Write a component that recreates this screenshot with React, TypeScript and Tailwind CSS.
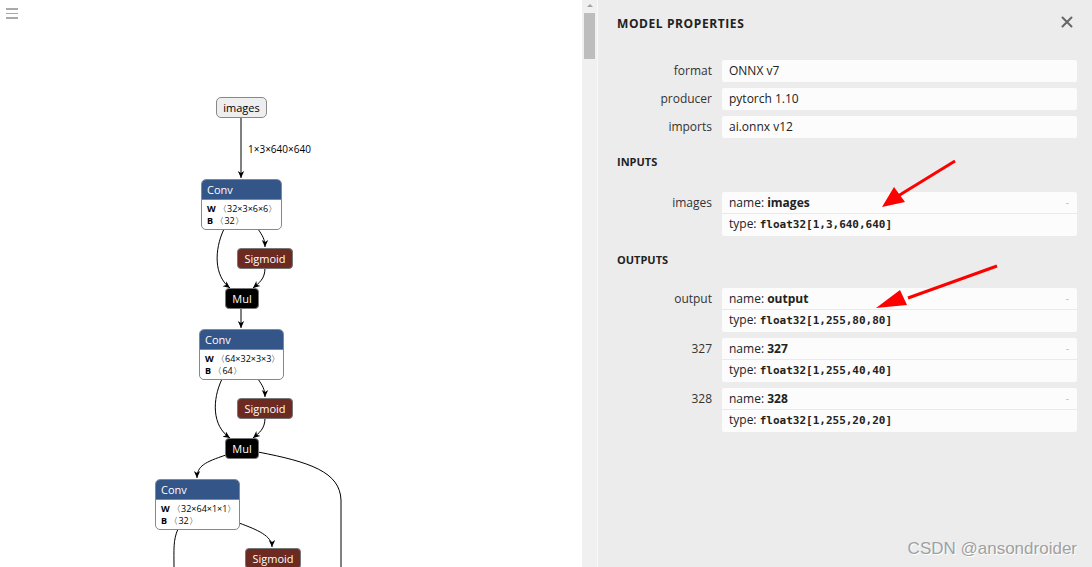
import React from "react";

const sans = { fontFamily: '"Open Sans", "Noto Sans", sans-serif' };

function ConvNode({ x, y, w, W, B }: { x: number; y: number; w: number; W: string; B: string }) {
  return (
    <div
      className="absolute rounded-[5px] border border-[#888] bg-white overflow-hidden"
      style={{ left: x, top: y, width: w, height: 51 }}
    >
      <div className="h-[19px] bg-[#335588] text-white text-[11px] leading-[19px] pl-[5px]">Conv</div>
      <div className="border-t border-[#888] pl-[5px] pt-[3px] text-[9px] leading-[12px] text-black">
        <div>
          <b>W</b> 〈{W}〉
        </div>
        <div>
          <b>B</b> 〈{B}〉
        </div>
      </div>
    </div>
  );
}

function Pill({ x, y, w, label, bg }: { x: number; y: number; w: number; label: string; bg: string }) {
  return (
    <div
      className={`absolute rounded-[4px] border border-[#777] text-white text-[11px] leading-[19px] text-center ${bg}`}
      style={{ left: x, top: y, width: w, height: 21 }}
    >
      {label}
    </div>
  );
}

function Row({ label, value }: { label: string; value: string }) {
  return (
    <div className="flex items-center">
      <div className="w-[95px] text-right text-[12px] text-[#333]">{label}</div>
      <div className="ml-[10px] flex-1 h-[22px] rounded-[2px] bg-[#fcfcfc] text-[12px] leading-[22px] pl-[7px] text-[#222]">
        {value}
      </div>
    </div>
  );
}

function IoRow({ label, name, type }: { label: string; name: string; type: string }) {
  return (
    <div className="flex items-start">
      <div className="w-[95px] text-right text-[12px] leading-[21px] text-[#333]">{label}</div>
      <div className="ml-[10px] flex-1 rounded-[2px] bg-[#fcfcfc] text-[12px] text-[#222]">
        <div className="h-[22px] leading-[21px] pl-[7px] flex items-center justify-between pr-[8px] border-b border-[#eaeaea]">
          <span>
            name: <b>{name}</b>
          </span>
          <span className="text-[#bbb] text-[10px]">-</span>
        </div>
        <div className="h-[22px] leading-[20px] pl-[7px]">
          type:{" "}
          <span className="font-bold text-[11px]" style={{ fontFamily: '"DejaVu Sans Mono", monospace' }}>
            {type}
          </span>
        </div>
      </div>
    </div>
  );
}

export default function App() {
  return (
    <div className="flex w-[1092px] h-[567px] overflow-hidden" style={sans}>
      {/* Graph canvas */}
      <div className="relative w-[582px] h-full bg-white">
        <div className="absolute left-[6px] top-[8px] flex flex-col gap-[3px]">
          <div className="w-[12px] h-[1.5px] bg-[#aaa]" />
          <div className="w-[12px] h-[1.5px] bg-[#aaa]" />
          <div className="w-[12px] h-[1.5px] bg-[#aaa]" />
        </div>
        <svg className="absolute left-0 top-0" width="582" height="567">
          <defs>
            <marker id="ar" markerWidth="8" markerHeight="8" refX="7" refY="4" orient="auto" markerUnits="userSpaceOnUse">
              <path d="M0,0.8 L7,4 L0,7.2 L2,4 Z" fill="#000" />
            </marker>
          </defs>
          <g fill="none" stroke="#000" strokeWidth="1">
            <path d="M241,117 L241,178" markerEnd="url(#ar)" />
            <path d="M224,229 C214,250 214,276 230,288" markerEnd="url(#ar)" />
            <path d="M258,229 C262,235 265,239 265,247" markerEnd="url(#ar)" />
            <path d="M265,268 C265,279 259,283 253,288" markerEnd="url(#ar)" />
            <path d="M241,308 L241,328" markerEnd="url(#ar)" />
            <path d="M222,379 C212,400 212,426 230,438" markerEnd="url(#ar)" />
            <path d="M258,379 C262,385 265,389 265,397" markerEnd="url(#ar)" />
            <path d="M265,418 C265,429 259,433 253,438" markerEnd="url(#ar)" />
            <path d="M226,455 C205,462 197,466 197,478" markerEnd="url(#ar)" />
            <path d="M258,452 C310,462 340,472 341,500 L341,567" />
            <path d="M178,529 C173,540 174,550 174,567" />
            <path d="M239,523 C258,530 272,536 272,547" markerEnd="url(#ar)" />
          </g>
          <text x="248" y="153" fontSize="10" fill="#000" fontFamily="Open Sans, Noto Sans, sans-serif">
            1×3×640×640
          </text>
        </svg>
        <div className="absolute left-[216px] top-[97px] w-[51px] h-[21px] rounded-[5px] border border-[#888] bg-[#eee] text-[11px] leading-[19px] text-center text-black">
          images
        </div>
        <ConvNode x={201} y={179} w={81} W="32×3×6×6" B="32" />
        <Pill x={237} y={248} w={56} label="Sigmoid" bg="bg-[#6c2a21]" />
        <Pill x={225} y={288} w={34} label="Mul" bg="bg-black" />
        <ConvNode x={199} y={329} w={85} W="64×32×3×3" B="64" />
        <Pill x={237} y={398} w={56} label="Sigmoid" bg="bg-[#6c2a21]" />
        <Pill x={225} y={438} w={34} label="Mul" bg="bg-black" />
        <ConvNode x={155} y={479} w={85} W="32×64×1×1" B="32" />
        <Pill x={245} y={548} w={56} label="Sigmoid" bg="bg-[#6c2a21]" />
      </div>

      {/* scrollbar */}
      <div className="relative w-[16px] h-full bg-[#f0f0f0] border-r border-[#f8f8f8]">
        <div className="absolute left-[5px] top-[4px] w-0 h-0 border-l-[3px] border-r-[3px] border-b-[3px] border-l-transparent border-r-transparent border-b-[#a3a3a3]" />
        <div className="absolute left-[2px] top-[13px] w-[11px] h-[46px] bg-[#bdbdbd]" />
      </div>

      {/* properties panel */}
      <div className="relative flex-1 h-full bg-[#ececec] pl-[19px] pr-[15px]">
        <div className="flex items-center justify-between pt-[16px] h-[32px]">
          <div className="text-[12px] font-bold tracking-[0.6px] text-[#222]">MODEL PROPERTIES</div>
          <svg width="12" height="12" viewBox="0 0 12 12" className="mr-[4px] mt-[-5px]">
            <path d="M1.5,1.5 L10.5,10.5 M10.5,1.5 L1.5,10.5" stroke="#666" strokeWidth="2" strokeLinecap="round" />
          </svg>
        </div>
        <div className="mt-[28px] flex flex-col gap-[6px]">
          <Row label="format" value="ONNX v7" />
          <Row label="producer" value="pytorch 1.10" />
          <Row label="imports" value="ai.onnx v12" />
        </div>
        <div className="mt-[16px] text-[11px] font-bold text-[#222] leading-[16px]">INPUTS</div>
        <div className="mt-[22px]">
          <IoRow label="images" name="images" type="float32[1,3,640,640]" />
        </div>
        <div className="mt-[16px] text-[11px] font-bold text-[#222] leading-[16px]">OUTPUTS</div>
        <div className="mt-[20px] flex flex-col gap-[6px]">
          <IoRow label="output" name="output" type="float32[1,255,80,80]" />
          <IoRow label="327" name="327" type="float32[1,255,40,40]" />
          <IoRow label="328" name="328" type="float32[1,255,20,20]" />
        </div>
        <svg className="absolute left-0 top-0 pointer-events-none" width="494" height="567">
          <line x1="357" y1="161" x2="300" y2="196" stroke="#f00" strokeWidth="3" />
          <path d="M284,207 L296,187 L307,202 Z" fill="#f00" />
          <line x1="399" y1="266" x2="310" y2="298" stroke="#f00" strokeWidth="3" />
          <path d="M278,308 L302,290 L309,305 Z" fill="#f00" />
        </svg>
        <div
          className="absolute right-[15px] bottom-[6px] text-[17px] text-[#a0a0a0]"
          style={{ fontFamily: '"Liberation Sans", Arial, sans-serif', textShadow: "1px 1px 0 #fff" }}
        >
          CSDN @ansondroider
        </div>
      </div>
    </div>
  );
}
